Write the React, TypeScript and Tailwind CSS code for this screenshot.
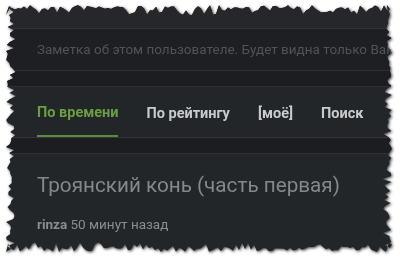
import React from "react";

// torn paper edge: deterministic jagged polygon
function rng(seed: number) {
  let s = seed;
  return () => {
    s = (s * 16807) % 2147483647;
    return (s - 1) / 2147483646;
  };
}

function tornPath(w: number, h: number, depth: number, step: number) {
  const r = rng(7);
  const pts: string[] = [];
  const jag = () => {
    const v = r();
    return v < 0.2 ? depth * (0.7 + r() * 0.3) : depth * r() * 0.6;
  };
  for (let x = 0; x <= w; x += step) pts.push(`${x}px ${jag().toFixed(1)}px`);
  for (let y = 0; y <= h; y += step) pts.push(`${(w - jag()).toFixed(1)}px ${y}px`);
  for (let x = w; x >= 0; x -= step) pts.push(`${x}px ${(h - jag()).toFixed(1)}px`);
  for (let y = h; y >= 0; y -= step) pts.push(`${jag().toFixed(1)}px ${y}px`);
  return `polygon(${pts.join(",")})`;
}

const tabs = ["По времени", "По рейтингу", "[моё]", "Поиск"];

export default function App() {
  const clip = tornPath(386, 247, 10, 3);
  return (
    <div className="w-[400px] h-[262px] bg-white overflow-hidden pt-[5px] pl-[6px]">
      <div className="w-[386px] h-[247px] drop-shadow-[1px_1px_1.5px_rgba(0,0,0,0.8)]">
        <div
          className="w-full h-full bg-[#232629] flex flex-col font-['Roboto',sans-serif]"
          style={{ clipPath: clip }}
        >
          <div className="h-[24px] shrink-0 border-b border-[#303336] bg-[#25272a]" />
          <div className="h-[41px] shrink-0 bg-[#1d1f22] flex items-center pl-[31px] text-[13.5px] text-[#505357] whitespace-nowrap">
            Заметка об этом пользователе. Будет видна только Вам
          </div>
          <div className="h-[17px] shrink-0 bg-[#1b1d20] border-y border-[#2d3033]" />
          <div className="h-[51px] shrink-0 flex items-end gap-[28px] pl-[31px] border-b border-[#33363a]">
            {tabs.map((t, i) => (
              <div
                key={t}
                className={
                  "h-full flex items-center pt-[4px] text-[14.5px] font-bold " +
                  (i === 0
                    ? "text-[#6b9e42] border-b-2 border-[#5c8a3c]"
                    : "text-[#c9cacb]")
                }
              >
                {t}
              </div>
            ))}
          </div>
          <div className="h-[16px] shrink-0 bg-[#1b1d20] border-b border-[#2f3235]" />
          <div className="flex flex-col pl-[31px] pt-[17px]">
            <div className="text-[20.7px] text-[#84878b] leading-[28px]">
              Троянский конь (часть первая)
            </div>
            <div className="mt-[15px] text-[13.5px] text-[#8a8d90]">
              <span className="font-bold">rinza</span> 50 минут назад
            </div>
          </div>
        </div>
      </div>
    </div>
  );
}
